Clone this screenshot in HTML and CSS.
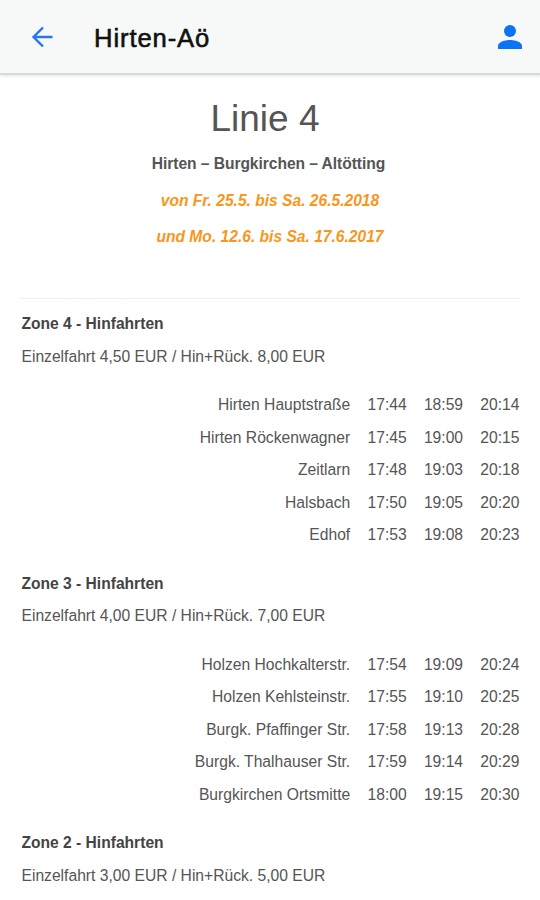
FILE: index.html
```html
<!doctype html>
<html lang="de">

<head>
	<meta charset="UTF-8">
	<meta name="viewport" content="width=device-width, initial-scale=1.0">
	<title>Hirten-Aö</title>
	<link rel="stylesheet" href="styles.css">
</head>

<body>

	<!-- Kopfzeile -->
	<header class="header">
		<a href="#" class="back">
			<svg width="22" height="22" viewBox="0 0 22 22">
				<path d="M21.500 11H2.500M12 1.500L2.500 11l9.500 9.500" fill="none" stroke="#2478ec" stroke-width="2.400" />
			</svg>
		</a>
		<h1 class="header-title">Hirten-Aö</h1>
		<a href="#" class="user">
			<svg width="24" height="24" viewBox="0 0 24 24" fill="#0a74f5">
				<circle cx="12" cy="6" r="6" />
				<path d="M0 24v-3c0-4 7-6 12-6s12 2 12 6v3z" />
			</svg>
		</a>
	</header>

	<!-- Linie -->
	<div class="intro">
		<h2 class="line">Linie 4</h2>
		<p class="route">Hirten – Burgkirchen – Altötting</p>
		<p class="date">von Fr. 25.5. bis Sa. 26.5.2018</p>
		<p class="date">und Mo. 12.6. bis Sa. 17.6.2017</p>
	</div>

	<!-- Fahrplan -->
	<div class="plan">
		<div class="zone">
			<h3 class="zone-title">Zone 4 - Hinfahrten</h3>
			<p class="fare">Einzelfahrt 4,50 EUR / Hin+Rück. 8,00 EUR</p>
			<table class="times">
				<tr><td>Hirten Hauptstraße</td><td>17:44</td><td>18:59</td><td>20:14</td></tr>
				<tr><td>Hirten Röckenwagner</td><td>17:45</td><td>19:00</td><td>20:15</td></tr>
				<tr><td>Zeitlarn</td><td>17:48</td><td>19:03</td><td>20:18</td></tr>
				<tr><td>Halsbach</td><td>17:50</td><td>19:05</td><td>20:20</td></tr>
				<tr><td>Edhof</td><td>17:53</td><td>19:08</td><td>20:23</td></tr>
			</table>
		</div>

		<div class="zone">
			<h3 class="zone-title">Zone 3 - Hinfahrten</h3>
			<p class="fare">Einzelfahrt 4,00 EUR / Hin+Rück. 7,00 EUR</p>
			<table class="times">
				<tr><td>Holzen Hochkalterstr.</td><td>17:54</td><td>19:09</td><td>20:24</td></tr>
				<tr><td>Holzen Kehlsteinstr.</td><td>17:55</td><td>19:10</td><td>20:25</td></tr>
				<tr><td>Burgk. Pfaffinger Str.</td><td>17:58</td><td>19:13</td><td>20:28</td></tr>
				<tr><td>Burgk. Thalhauser Str.</td><td>17:59</td><td>19:14</td><td>20:29</td></tr>
				<tr><td>Burgkirchen Ortsmitte</td><td>18:00</td><td>19:15</td><td>20:30</td></tr>
			</table>
		</div>

		<div class="zone">
			<h3 class="zone-title">Zone 2 - Hinfahrten</h3>
			<p class="fare">Einzelfahrt 3,00 EUR / Hin+Rück. 5,00 EUR</p>
		</div>
	</div>

</body>

</html>
```

FILE: styles.css
```css
body {
	margin: 0;
	padding: 0;
	font-family: "Liberation Sans", Arial, sans-serif;
	font-size: 15.65px;
	color: #555;
	background: #fff;
}

h1,
h2,
h3,
p {
	margin: 0;
}

.header {
	display: flex;
	align-items: center;
	height: 73px;
	padding: 0 18px 0 31px;
	background: #f7f9f9;
	border-bottom: 2px solid #d9dada;
	box-shadow: 0 1px 3px 0 rgba(0, 0, 0, .12);
}

.back,
.user {
	display: flex;
}

.header-title {
	flex: 1;
	margin-left: 41px;
	padding-top: 3px;
	font-size: 25.6px;
	font-weight: 400;
	letter-spacing: .9px;
	color: #111;
	-webkit-text-stroke: .6px #111;
}

.intro {
	height: 223px;
	margin: 0 19px 0 21px;
	border-bottom: 1px solid #eee;
	text-align: center;
}

.line {
	padding-top: 22px;
	padding-right: 12px;
	font-size: 37px;
	line-height: 44px;
	font-weight: 400;
}

.route {
	margin-top: 5px;
	padding-right: 5px;
	font-size: 15.6px;
	letter-spacing: -.05px;
	line-height: 36.5px;
	font-weight: 700;
}

.date {
	padding-right: 2px;
	font-size: 15.6px;
	line-height: 36.5px;
	font-weight: 700;
	font-style: italic;
	color: #f9961b;
}

.plan {
	padding: 9px 20.5px 0 21.5px;
}

.zone {
	line-height: 32.5px;
}

.zone-title {
	font-size: 15.6px;
	font-weight: 700;
	color: #444;
}

.times {
	width: 100%;
	margin: 16px 0;
	border-collapse: collapse;
}

.times td {
	height: 32.5px;
	padding: 0 0 0 17.3px;
	text-align: right;
	white-space: nowrap;
}

.times td:first-child {
	width: 100%;
	padding: 0;
}
```
